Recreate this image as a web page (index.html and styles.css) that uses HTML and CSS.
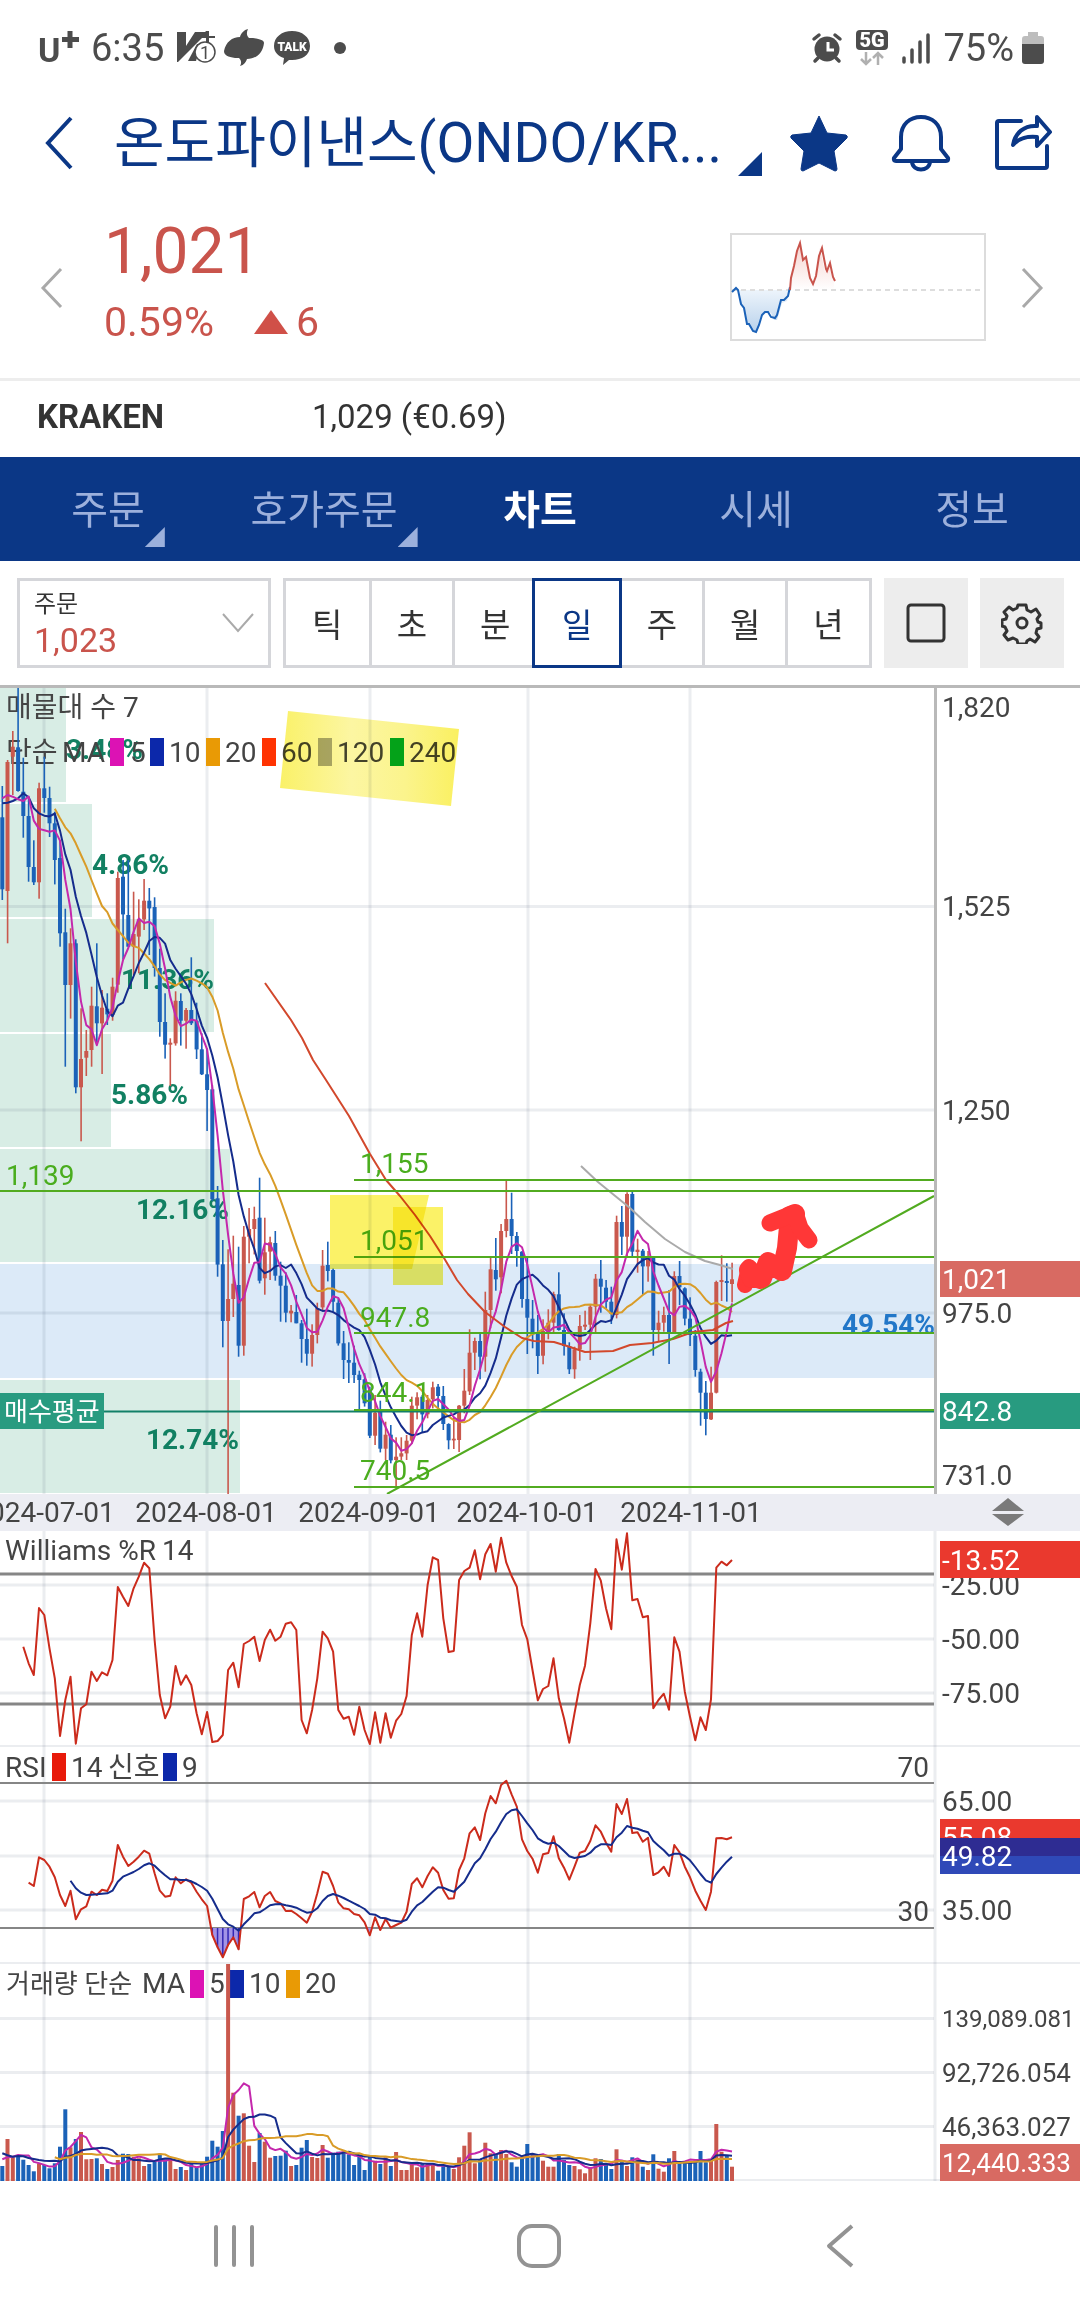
FILE: index.html
```html
<!DOCTYPE html>
<html lang="ko">
<head>
<meta charset="utf-8">
<meta name="viewport" content="width=device-width">
<title>온도파이낸스 차트</title>
<link rel="stylesheet" href="styles.css">
</head>
<body>
<div class="status">
  <div class="status-group">
    <svg class="carrier" width="42" height="40" viewBox="0 0 42 40"><text x="1" y="34" class="carrier-text">U</text><path d="M33 3v17M25 11.500h17" stroke="#4c4c4c" stroke-width="5"/></svg>
    <span class="status-text clock">6:35</span>
    <svg width="40" height="36" viewBox="0 0 40 36"><path d="M1 2h9v14L19 2h13L2 32H1z" fill="#4c4c4c"/><path d="M30 1h3v5h6v2h-6v5h-3V8h-6z" fill="#4c4c4c"/><path d="M12 31l9-17h4l-5 17z" fill="#4c4c4c"/><circle cx="29" cy="22" r="10" fill="#fff" stroke="#4c4c4c" stroke-width="1.500"/><text x="29" y="29" text-anchor="middle" class="badge-text">1</text></svg>
    <svg width="40" height="38" viewBox="0 0 40 38"><path d="M24 0c-2 4-1 7 1 9h4c7 1 11 2 11 5-1 10-8 16-17 16-1 3-3 6-7 7 2-3 1-6-1-8h-4C4 28 0 26 0 22 2 13 8 8 16 8c1-4 4-7 8-8z" fill="#4c4c4c"/></svg>
    <svg width="40" height="38" viewBox="0 0 40 38"><path d="M20 2c10 0 18 6 18 15s-8 14-18 14h-3l-6 5 1-7C6 27 2 23 2 17 2 8 10 2 20 2z" fill="#4c4c4c"/><text x="20" y="22" text-anchor="middle" class="talk-text">TALK</text></svg>
    <span class="dot"></span>
  </div>
  <div class="status-group status-right">
    <svg width="32" height="32" viewBox="0 0 32 32"><g fill="none" stroke="#4c4c4c" stroke-width="3.500" stroke-linecap="round"><path d="M3 7l5-4M29 7l-5-4M7 26l-3 3M25 26l3 3"/></g><circle cx="16" cy="17" r="12.500" fill="#4c4c4c"/><path d="M17 10v8h6" fill="none" stroke="#fff" stroke-width="3"/></svg>
    <svg width="34" height="38" viewBox="0 0 34 38"><rect x="1" y="1" width="32" height="20" rx="4" fill="#4c4c4c"/><text x="17" y="18" text-anchor="middle" class="fiveg-text">5G</text><path d="M11 23v12M6 30l5 5 5-5M23 36V24M18 29l5-5 5 5" fill="none" stroke="#b0b0b0" stroke-width="2.500"/></svg>
    <svg width="30" height="32" viewBox="0 0 30 32"><path d="M3 26v4M11 18v12M19 10v20M27 3v27" stroke="#4c4c4c" stroke-width="3.500" stroke-linecap="round"/></svg>
    <span class="status-text">75%</span>
    <svg width="22" height="32" viewBox="0 0 22 32"><path d="M6 0h10v4h3q3 0 3 3v6H0V7q0-3 3-3h3z" fill="#bdbdbd"/><path d="M0 12h22v17q0 3-3 3H3q-3 0-3-3z" fill="#4c4c4c"/></svg>
  </div>
</div>

<header class="header">
  <button class="icon-button back" aria-label="뒤로"><svg width="32" height="56" viewBox="0 0 32 56"><path d="M29 3L6 28l23 25" fill="none" stroke="#0b3786" stroke-width="4"/></svg></button>
  <h1 class="title">온도파이낸스(ONDO/KR...</h1>
  <svg class="corner" width="24" height="24" viewBox="0 0 24 24"><path d="M24 0v24H0z" fill="#0b3786"/></svg>
  <div class="header-actions">
    <button class="icon-button" aria-label="즐겨찾기"><svg width="60" height="60" viewBox="0 0 60 60"><path d="M30 3l8 17 19 2q2 1 1 3L45 38l3 18q0 2-2 2L30 50l-16 8q-2 0-2-2l3-18L2 25q-1-2 1-3l19-2z" fill="#0b3786" stroke="#0b3786" stroke-width="1" stroke-linejoin="round"/></svg></button>
    <button class="icon-button" aria-label="알림"><svg width="60" height="60" viewBox="0 0 60 60"><g fill="none" stroke="#0b3786" stroke-width="4" stroke-linejoin="round"><path d="M10 36V24C10 11 19 4 30 4s20 7 20 20v12l7 9q1 3-2 3H5q-3 0-2-3z"/><path d="M21 49c1 10 17 10 18 0"/></g></svg></button>
    <button class="icon-button" aria-label="공유"><svg width="60" height="60" viewBox="0 0 60 60"><g fill="none" stroke="#0b3786" stroke-width="4" stroke-linejoin="round" stroke-linecap="round"><path d="M28 8H6q-2 0-2 2v43q0 2 2 2h46q2 0 2-2V33"/><path d="M20 32c2-12 11-20 24-19V4l13 15-13 14v-9c-10-1-18 1-24 8z"/></g></svg></button>
  </div>
</header>

<section class="quote">
  <button class="icon-button" aria-label="이전 종목"><svg width="24" height="44" viewBox="0 0 24 44"><path d="M21 3L3 22l18 19" fill="none" stroke="#a9a9a9" stroke-width="3"/></svg></button>
  <div class="quote-body">
    <div class="price">1,021</div>
    <div class="change"><span>0.59%</span><svg width="34" height="24" viewBox="0 0 34 24"><path d="M17 0l17 24H0z" fill="#d05048"/></svg><span>6</span></div>
  </div>
  <svg class="mini" width="256" height="110" viewBox="730 233 256 110">
    <defs><linearGradient id="mb" x1="0" y1="0" x2="0" y2="1"><stop offset="0" stop-color="#edf4fb"/><stop offset="1" stop-color="#b9d2ec"/></linearGradient><linearGradient id="mr" x1="0" y1="0" x2="0" y2="1"><stop offset="0" stop-color="#f6d0cc"/><stop offset="1" stop-color="#fff"/></linearGradient></defs>
    <rect x="731" y="234" width="254" height="106" fill="#fff" stroke="#dcdcdc" stroke-width="2"/>
    <path d="M738 290l3 14 3 4 3 16h3l3 8h4l3-9 3-10 4-2 4 2 3 7h3l5-17 5-2 3-11z" fill="url(#mb)"/>
    <path d="M790 290l3-22 3-10 4-16 3 17 3-3 4 24 3 4 3-8 4-28 5 24 4-8 3 14 2 3v9z" fill="url(#mr)"/>
    <path d="M732 290h253" stroke="#ddd" stroke-width="2" stroke-dasharray="5 4"/>
    <path d="M732 292l4-4 2 2 3 14 3 4 3 16h2l4 7 3 1 3-7 3-10 3-3h3l3 5 4 1 2-3 4-15h3l4-4 2-9" fill="none" stroke="#1b62b8" stroke-width="2"/>
    <path d="M790 290l1-12 3-12 3-15 3-8 3 17 3-3 4 21 3 6 3-8 3-20 3-8 4 21 1 2 3-8 3 14 2 4" fill="none" stroke="#c9544c" stroke-width="2"/>
  </svg>
  <button class="icon-button next" aria-label="다음 종목"><svg width="24" height="44" viewBox="0 0 24 44"><path d="M3 3l18 19L3 41" fill="none" stroke="#a9a9a9" stroke-width="3"/></svg></button>
</section>

<div class="exchange"><strong>KRAKEN</strong><span>1,029 (€0.69)</span></div>

<nav class="tabs">
  <a href="#order">주문<i class="more"></i></a>
  <a href="#book">호가주문<i class="more"></i></a>
  <a href="#chart" class="active">차트</a>
  <a href="#market">시세</a>
  <a href="#info">정보</a>
</nav>

<div class="toolbar">
  <button class="order" aria-haspopup="listbox"><span class="order-text"><small>주문</small><b>1,023</b></span><svg width="34" height="22" viewBox="0 0 34 22"><path d="M2 2l15 17L32 2" fill="none" stroke="#aaa" stroke-width="2"/></svg></button>
  <div class="periods">
    <button>틱</button><button>초</button><button>분</button><button class="active">일</button><button>주</button><button>월</button><button>년</button>
  </div>
  <button class="tool" aria-label="전체화면"><svg width="42" height="42" viewBox="0 0 42 42"><rect x="3" y="3" width="36" height="36" rx="3" fill="none" stroke="#333" stroke-width="3"/></svg></button>
  <button class="tool" aria-label="설정"><svg width="42" height="42" viewBox="0 0 42 42"><g fill="none" stroke="#333" stroke-width="3" stroke-linejoin="round"><path d="M17 3h8l1 5 4 2 5-3 4 6-3 4 1 3 3 1v5l-4 1-1 4 3 4-4 5-5-3-3 2-1 3h-8l-1-4-4-2-5 2-4-5 3-4-2-4-3-1v-6l4-1 1-3-3-4 5-5 4 3 4-2z"/><circle cx="21" cy="21" r="5"/></g></svg></button>
</div>

<main class="charts">
  <svg class="panel main-panel" viewBox="0 688 1080 806">
    <defs><linearGradient id="ink" x1="0" y1="0" x2="1" y2="0"><stop offset="0" stop-color="#faf168"/><stop offset=".4" stop-color="#fcf6a2"/><stop offset=".7" stop-color="#fbf48c"/><stop offset="1" stop-color="#faf060"/></linearGradient></defs>
    <g fill="#d8ede5">
      <rect x="0" y="688" width="66" height="114"/><rect x="0" y="804" width="92" height="113"/><rect x="0" y="919" width="214" height="113"/><rect x="0" y="1034" width="111" height="113"/><rect x="0" y="1149" width="230" height="113"/><rect x="0" y="1380" width="240" height="113"/>
    </g>
    <rect x="0" y="1264" width="934" height="114" fill="#dceaf8"/>
    <g class="grid"><path d="M0 906.500h934M0 1110h934M0 1313h934"/><path d="M44 688v806M207 688v806M370 688v806M528 688v806M690 688v806"/></g>
    <g class="share"><text x="66" y="759">3.48%</text><text x="92" y="874">4.86%</text><text x="214" y="989" text-anchor="end">11.36%</text><text x="111" y="1104">5.86%</text><text x="229" y="1219" text-anchor="end">12.16%</text><text x="239" y="1449" text-anchor="end">12.74%</text></g>
    <text class="share-blue" x="935" y="1334" text-anchor="end">49.54%</text>
    <g class="label"><text x="6" y="717">매물대 수 7</text><text x="6" y="762">단순</text><text x="62" y="762">MA</text></g>
    <rect x="110" y="738" width="14" height="28" fill="#dc12b4"/><rect x="150" y="738" width="14" height="28" fill="#0c28aa"/><rect x="206" y="738" width="14" height="28" fill="#e99a05"/><rect x="262" y="738" width="14" height="28" fill="#ff3302"/><rect x="318" y="738" width="14" height="28" fill="#aaa"/><rect x="390" y="738" width="14" height="28" fill="#04a92c"/>
    <g class="label"><text x="130" y="762">5</text><text x="169" y="762">10</text><text x="225" y="762">20</text><text x="281" y="762">60</text><text x="337" y="762">120</text><text x="409" y="762">240</text></g>
    <g id="candles"></g>
    <g id="averages" class="line"></g>
    <g class="line">
      <path stroke="#d2482c" d="M265 983L291 1020 302 1038 313 1060 326 1080 349 1116 370 1154 386 1180 400 1196 415 1215 430 1236 444 1258 457 1280 468 1294 485 1312 505 1327 522 1338 534 1341 554 1342 567 1346 585 1352 613 1351 630 1345 652 1343 673 1339 693 1332 713 1330 726 1323 733 1321"/>
      <path stroke="#aaa" d="M581 1166L598 1182 614 1195 630 1208 645 1222 665 1239 685 1252 705 1261 720 1265 733 1269"/>
    </g>
    <path d="M0 1411.500h934" stroke="#128068" stroke-width="2"/>
    <g stroke="#52ab20" stroke-width="2" fill="none"><path d="M354 1180h580M0 1191h934M354 1257h580M354 1333h580M354 1410h580M354 1487h580M387 1494L934 1196"/></g>
    <g class="level"><text x="6" y="1185">1,139</text><text x="360" y="1173">1,155</text><text x="360" y="1250">1,051</text><text x="360" y="1327">947.8</text><text x="360" y="1402">844.1</text><text x="360" y="1480">740.5</text></g>
    <rect x="0" y="1393" width="104" height="36" fill="#289b80"/><text class="tag medium" x="4" y="1421">매수평균</text>
    <g class="marker"><path fill="url(#ink)" d="M288 711L459 729 451 806 280 788z"/><path d="M330 1195h99l-17 74h-82z"/><path d="M393 1207h50v78h-50z"/></g>
    <g fill="none" stroke="#ff3737" stroke-linecap="round" stroke-linejoin="round"><path stroke-width="16" d="M745 1285L749 1267 760 1281 769 1261 776 1270"/><path stroke-width="20" d="M749 1270L752 1278 762 1278 768 1262 782 1271 787 1248 790 1216 795 1214"/><path stroke-width="17" d="M770 1223L795 1213 800 1228 809 1240"/></g>
    <path d="M935.500 688v806" stroke="#b9b9b9" stroke-width="3"/>
    <g class="label axis"><text x="942" y="717">1,820</text><text x="942" y="916">1,525</text><text x="942" y="1120">1,250</text><text x="942" y="1323">975.0</text><text x="942" y="1485">731.0</text></g>
    <rect x="940" y="1261" width="140" height="36" fill="#d86a62"/><rect x="940" y="1393" width="140" height="36" fill="#289b80"/>
    <g class="tag"><text x="942" y="1289">1,021</text><text x="942" y="1421">842.8</text></g>
  </svg>
  <svg class="panel dates" viewBox="0 1494 1080 37">
    <g class="label" text-anchor="middle"><text x="44" y="1522">2024-07-01</text><text x="206" y="1522">2024-08-01</text><text x="369" y="1522">2024-09-01</text><text x="527" y="1522">2024-10-01</text><text x="691" y="1522">2024-11-01</text></g>
    <path d="M992 1511l16-13 16 13zM992 1514h32l-16 12z" fill="#7a7a7a"/>
  </svg>
  <svg class="panel" viewBox="0 1531 1080 216">
    <g class="grid"><path d="M0 1585h934M0 1639h934M0 1693h934M0 1746.500h1080"/><path d="M44 1531v216M207 1531v216M370 1531v216M528 1531v216M690 1531v216M935 1531v216"/></g>
    <path d="M0 1574h934M0 1704h934" stroke="#868686" stroke-width="3"/>
    <g class="label"><text x="5" y="1560">Williams %R</text><text x="162" y="1560">14</text></g>
    <g id="williams" class="line"></g>
    <g class="label"><text x="942" y="1595">-25.00</text><text x="942" y="1649">-50.00</text><text x="942" y="1703">-75.00</text></g>
    <rect x="940" y="1541" width="140" height="37" fill="#ea392e"/><text class="tag" x="942" y="1570">-13.52</text>
  </svg>
  <svg class="panel" viewBox="0 1747 1080 217">
    <defs><clipPath id="low"><rect x="0" y="1928" width="934" height="36"/></clipPath></defs>
    <g class="grid"><path d="M0 1801h934M0 1856h934M0 1910h934M0 1963.500h1080"/><path d="M44 1747v217M207 1747v217M370 1747v217M528 1747v217M690 1747v217M935 1747v217"/></g>
    <path d="M0 1783h934M0 1928h934" stroke="#868686" stroke-width="2"/>
    <g class="label"><text x="5" y="1777">RSI</text><text x="71" y="1777">14</text><text x="108" y="1777">신호</text><text x="182" y="1777">9</text><text x="929" y="1777" text-anchor="end">70</text><text x="929" y="1921" text-anchor="end">30</text></g>
    <rect x="52" y="1753" width="14" height="28" fill="#e81a0a"/><rect x="163" y="1753" width="14" height="28" fill="#0c28aa"/>
    <g id="oversold" clip-path="url(#low)"></g>
    <g id="rsi" class="line"></g>
    <g class="label"><text x="942" y="1811">65.00</text><text x="942" y="1920">35.00</text></g>
    <rect x="940" y="1819" width="140" height="37" fill="#ea392e"/><text class="tag" x="942" y="1847">55.08</text>
    <rect x="940" y="1838" width="140" height="18" fill="#2e2c92"/><rect x="940" y="1856" width="140" height="18" fill="#2f49b8"/><text class="tag" x="942" y="1866">49.82</text>
  </svg>
  <svg class="panel" viewBox="0 1964 1080 217">
    <g class="grid"><path d="M0 2018.500h934M0 2072.500h934M0 2126.500h934M0 2180.500h1080"/><path d="M44 1964v217M207 1964v217M370 1964v217M528 1964v217M690 1964v217M935 1964v217"/></g>
    <g class="label"><text x="6" y="1993" class="medium">거래량 단순</text><text x="142" y="1993">MA</text><text x="209" y="1993">5</text><text x="249" y="1993">10</text><text x="305" y="1993">20</text></g>
    <rect x="190" y="1970" width="14" height="28" fill="#dc12b4"/><rect x="230" y="1970" width="14" height="28" fill="#0c28aa"/><rect x="286" y="1970" width="14" height="28" fill="#e99a05"/>
    <g id="volume"></g>
    <g id="volume-averages" class="line"></g>
    <g class="label"><text x="942" y="2027" class="small">139,089.081</text><text x="942" y="2082" class="medium">92,726.054</text><text x="942" y="2136" class="medium">46,363.027</text></g>
    <rect x="940" y="2144" width="140" height="37" fill="#d86a62"/><text class="tag medium" x="942" y="2172">12,440.333</text>
  </svg>
</main>

<footer class="system-nav">
  <button class="icon-button" aria-label="최근 앱"><svg width="40" height="48" viewBox="0 0 40 48"><path d="M2 4v38M20 4v38M38 4v38" stroke="#939393" stroke-width="4" stroke-linecap="round"/></svg></button>
  <button class="icon-button" aria-label="홈"><svg width="48" height="48" viewBox="0 0 48 48"><rect x="4" y="3" width="40" height="40" rx="13" fill="none" stroke="#939393" stroke-width="4"/></svg></button>
  <button class="icon-button" aria-label="뒤로"><svg width="32" height="48" viewBox="0 0 32 48"><path d="M28 3L5 23l23 20" fill="none" stroke="#939393" stroke-width="4" stroke-linejoin="round"/></svg></button>
</footer>
<script src="chart.js"></script>
</body>
</html>
```
FILE: styles.css
```css
* { box-sizing: border-box; }
body { margin: 0; background: #fff; color: #333; font-family: Roboto, "Noto Sans CJK KR", sans-serif; }
button { font: inherit; color: inherit; padding: 0; border: 0; background: none; cursor: pointer; }
svg { display: block; flex: none; }

.status { display: flex; justify-content: space-between; align-items: center; height: 96px; padding: 0 36px 0 37px; }
.status-group { display: flex; align-items: center; gap: 8px; }
.status-right { gap: 12px; }
.status-text { font-size: 38px; line-height: 40px; color: #4c4c4c; }
.status-right .status-text { margin-right: -4px; }
.clock { margin: 0 4px; }
.carrier-text { font-size: 34px; font-weight: 700; fill: #4c4c4c; }
.badge-text { font-size: 18px; fill: #4c4c4c; }
.talk-text { font-size: 12px; font-weight: 900; fill: #fff; }
.fiveg-text { font-size: 20px; font-weight: 900; fill: #fff; }
.dot { width: 12px; height: 12px; margin-left: 14px; border-radius: 50%; background: #4c4c4c; }

.icon-button { display: flex; align-items: center; justify-content: center; flex: none; }
.header { display: flex; align-items: center; height: 94px; padding: 0 27px 0 42px; color: #0b3786; }
.title { margin: 0 0 0 40px; font-size: 55px; line-height: 80px; font-weight: 400; white-space: nowrap; }
.corner { align-self: flex-end; margin: 0 auto 14px 16px; }
.header-actions { display: flex; gap: 42px; }

.quote { display: flex; align-items: center; height: 188px; padding: 8px 36px 0 40px; color: #c9544c; }
.quote-body { flex: 1; margin-left: 40px; padding-bottom: 4px; }
.price { font-size: 64px; line-height: 72px; }
.change { display: flex; align-items: center; gap: 8px; font-size: 41px; line-height: 68px; }
.change svg { margin-left: 32px; }
.next { margin-left: 34px; }

.exchange { display: flex; align-items: center; height: 79px; padding: 0 37px 4px; border-top: 3px solid #ededed; font-size: 33px; line-height: 40px; }
.exchange strong { width: 275px; font-weight: 700; }

.tabs { display: grid; grid-template-columns: repeat(5, 1fr); height: 104px; padding-top: 4px; background: #0b3786; }
.tabs a { position: relative; justify-self: center; align-self: center; color: #9cb0dc; font-size: 40px; line-height: 56px; text-decoration: none; }
.tabs .active { color: #fff; font-weight: 700; }
.more { position: absolute; right: -20px; bottom: -8px; width: 20px; height: 20px; background: #9cb0dc; clip-path: polygon(100% 0, 100% 100%, 0 100%); }

.toolbar { display: grid; grid-template-columns: 253fr 588fr 84fr 84fr; gap: 12px; height: 127px; padding: 17px 16px 0 17px; border-bottom: 3px solid #b9b9b9; }
.toolbar > * { height: 90px; }
.order { display: flex; align-items: center; justify-content: space-between; padding: 0 13px 0 14px; border: 3px solid #d5d6da; text-align: left; }
.order-text { display: flex; flex-direction: column; }
.order small { font-size: 24px; line-height: 34px; }
.order b { font-size: 34px; line-height: 38px; font-weight: 400; color: #c9544c; }
.periods { display: grid; grid-template-columns: repeat(7, 1fr); border: 3px solid #d5d6da; }
.periods button { font-size: 33px; border-left: 3px solid #d5d6da; }
.periods button:first-child { border-left: 0; }
.periods .active { margin: -3px; border: 3px solid #0b3786; color: #0b3786; z-index: 1; }
.tool { display: flex; align-items: center; justify-content: center; background: #ededed; }

.panel { width: 100%; height: auto; font-size: 28px; }
.dates { background: #ecedf3; }
.grid { fill: none; stroke: #3c506e; stroke-opacity: .1; stroke-width: 3; }
.label { fill: #444; }
.share { fill: #128062; font-weight: 700; }
.share-blue { fill: #2277c8; font-weight: 700; }
.level { fill: #4aad1e; }
.tag { fill: #fff; }
.small { font-size: 24px; }
.medium { font-size: 26px; }
.line { fill: none; stroke-width: 2; stroke-linejoin: round; }
.marker { fill: #fbf267; mix-blend-mode: multiply; }
.marker path { mix-blend-mode: multiply; }

.system-nav { display: flex; justify-content: space-between; align-items: center; height: 131px; padding: 0 224px 0 214px; }
```
FILE: chart.js
```js
// Daily bars, as drawn heights: direction, high, low, body top, body bottom.
const bars = `B 318 660 412 628,R 240 790 246 633,R 153 345 200 230,B 24 335 202 333,B 233 473 335 408,B 350 605 408 561,B 481 615 561 607,R 308 656 325 607,B 230 398 325 354,B 320 471 354 430,
B 395 613 430 540,B 480 800 534 760,B 686 1160 757 915,R 745 1016 790 915,B 778 1240 790 1222,R 985 1384 1137 1222,R 1050 1188 1113 1133,R 920 1160 977 1110,B 790 1095 979 1030,R 930 1182 983 1030,
B 940 1035 986 1003,R 893 1022 920 1005,R 575 938 594 914,B 540 838 590 703,B 540 800 705 800,R 635 885 762 800,R 658 880 718 770,R 597 750 662 718,B 624 825 662 685,B 652 890 681 864,
B 806 1070 864 1026,B 940 1136 1026 1094,R 1075 1218 1088 1094,R 934 1097 962 1090,B 940 1097 963 1022,R 984 1106 990 1022,B 832 1035 990 1030,B 968 1137 1022 1108,B 1060 1185 1108 1183,B 1105 1353 1183 1230,
B 1215 1562 1228 1558,B 1518 1790 1555 1754,B 1680 2002 1753 1923,R 1708 2442 1857 1923,R 1667 1911 1811 1857,B 1700 2030 1815 1997,R 1638 2027 1670 1997,R 1584 1750 1647 1670,R 1580 1723 1617 1647,B 1493 1810 1613 1802,
R 1613 1844 1717 1795,R 1670 1800 1687 1715,B 1653 1802 1689 1787,B 1745 1925 1787 1817,B 1777 1927 1817 1898,R 1875 1927 1892 1900,B 1845 1930 1896 1930,B 1920 2048 1930 1977,B 1886 2057 1977 2021,R 1933 2060 1965 2021,
R 1868 1990 1884 1965,R 1710 1890 1757 1882,B 1685 1804 1755 1773,B 1766 1895 1770 1865,B 1855 1997 1868 1990,B 1953 2097 1990 2040,B 1987 2109 2040 2048,B 1997 2109 2048 2085,B 2072 2190 2084 2100,B 2080 2180 2098 2170,
B 2120 2274 2130 2267,R 2145 2295 2198 2267,B 2162 2317 2195 2306,R 2225 2340 2264 2306,B 2235 2350 2264 2341,R 2272 2420 2330 2340,R 2272 2340 2320 2330,R 2265 2340 2282 2320,R 2150 2292 2177 2282,R 2137 2218 2152 2177,
B 2145 2256 2150 2203,R 2145 2215 2160 2203,R 2105 2185 2122 2158,B 2112 2185 2120 2148,B 2118 2250 2148 2232,B 2230 2308 2232 2281,R 2210 2307 2276 2281,R 2175 2316 2177 2280,R 2067 2200 2132 2177,R 1948 2145 2018 2134,
R 1973 2070 1983 2018,B 1957 2098 1983 2030,R 1835 2075 1890 2030,R 1732 1945 1768 1890,B 1674 1832 1770 1798,R 1632 1840 1653 1792,R 1500 1672 1617 1653,B 1538 1722 1617 1668,B 1656 1760 1668 1713,B 1713 1883 1715 1857,
B 1730 2022 1857 1913,B 1860 2005 1916 1963,B 1905 2082 1960 2028,R 1918 2053 1953 2027,R 1888 1978 1928 1950,R 1835 1960 1842 1928,B 1777 1952 1843 1950,B 1900 2027 1950 1998,B 1987 2082 1998 2068,R 2000 2096 2008 2068,
R 1905 2042 1938 2008,R 1892 1950 1934 1940,R 1875 2040 1880 1934,R 1782 1957 1796 1880,B 1740 1898 1796 1820,B 1800 1886 1823 1865,B 1820 1932 1865 1901,R 1607 1915 1626 1905,B 1578 1725 1626 1670,R 1537 1728 1542 1670,
B 1535 1730 1542 1715,R 1676 1778 1709 1716,B 1707 1844 1712 1759,R 1713 1805 1736 1759,B 1730 2027 1734 1950,R 1892 1985 1928 1950,R 1880 1955 1905 1928,B 1830 2052 1905 1957,R 1774 1960 1788 1957,B 1743 1875 1788 1822,
B 1822 1936 1825 1916,B 1852 1998 1916 1965,B 1950 2090 1967 2070,B 2066 2237 2075 2138,B 2103 2266 2138 2217,R 2060 2220 2138 2218,R 1802 2140 1806 2138,R 1726 1863 1800 1806,B 1750 1865 1803 1809,R 1748 1867 1798 1812`
  .split(',').map(s => { const [dir, ...v] = s.trim().split(' '); return { dir, v: v.map(Number) }; });

const williams = [380,430,465,264,285,385,475,648,540,470,671,565,553,455,483,457,466,420,201,230,258,205,170,128,145,360,525,595,560,438,494,466,495,580,643,576,666,663,645,450,428,502,372,363,350,423,360,329,362,350,311,307,330,600,640,570,475,335,355,395,570,596,590,644,560,630,672,577,668,580,653,602,582,528,345,280,350,195,112,120,295,396,393,180,153,143,91,178,103,72,155,53,128,168,200,315,358,450,541,507,498,415,535,595,668,580,495,437,310,147,182,265,328,58,149,40,241,237,292,288,565,540,521,569,352,395,515,590,661,592,630,538,143,125,136,120];
const rsi = [428,438,352,360,380,412,465,498,452,538,508,499,455,465,449,453,422,315,350,378,365,350,332,341,400,452,470,467,412,430,418,428,455,478,498,585,622,652,615,592,628,477,469,456,502,468,456,483,490,513,512,522,535,548,515,460,395,401,438,487,505,508,522,526,547,586,532,570,537,563,555,548,515,432,415,442,408,382,398,450,476,475,390,355,280,262,300,220,168,190,135,122,163,200,298,333,356,398,343,339,289,355,383,419,380,338,333,303,256,275,308,335,192,222,177,279,277,305,293,405,397,380,408,315,337,380,412,452,482,510,455,295,294,298,292];
const signal = [422,445,458,465,464,463,461,460,452,425,410,403,396,387,376,370,377,392,406,418,418,420,420,424,432,441,452,476,507,537,553,560,572,553,537,520,517,507,496,493,492,496,499,503,511,518,516,505,483,468,462,467,474,482,490,498,507,522,524,533,535,541,543,545,539,515,496,486,470,455,442,443,450,455,440,425,397,370,355,328,297,275,247,222,211,208,228,250,270,295,305,311,308,318,333,349,354,351,348,338,322,313,313,315,292,278,258,263,266,272,277,303,317,331,347,341,341,348,361,381,402,421,428,402,383,365,350];
const volume = [648,567,622,618,629,645,664,640,645,655,640,590,478,592,567,546,628,627,625,642,657,651,630,611,612,620,625,648,642,632,611,628,630,657,651,660,640,652,640,620,572,590,543,42,428,497,490,587,636,549,575,623,618,617,602,648,645,593,570,621,624,585,623,608,605,610,613,645,621,660,620,632,642,622,648,606,660,660,640,652,640,640,642,662,648,650,657,622,587,547,640,630,578,610,612,600,612,637,650,620,582,612,615,632,650,650,612,630,645,648,658,670,652,625,627,645,657,598,630,648,622,628,650,660,613,656,665,625,603,640,638,638,632,603,637,630,522,605,615,650];

const RED = '#c9584d', BLUE = '#1b62b8';
const xAt = i => 2.3 + 5.25 * i;
const price = v => 680 + v / 3;
const fill = (id, html) => { document.getElementById(id).innerHTML = html; };
const points = (values, start, y) => values.map((v, k) => xAt(start + k).toFixed(1) + ',' + y(v).toFixed(1)).join(' ');
const line = (values, start, y, color) => `<polyline points="${points(values, start, y)}" stroke="${color}"/>`;
const average = (values, n) => values.slice(n - 1).map((_, k) => values.slice(k, k + n).reduce((a, b) => a + b) / n);
const rect = (x, y, w, h, c) => `<rect x="${x.toFixed(1)}" y="${y.toFixed(1)}" width="${w}" height="${Math.max(h, 1.5).toFixed(1)}" fill="${c}"/>`;

fill('candles', bars.map(({ dir, v: [hi, lo, top, bottom] }, i) => {
  const c = dir === 'R' ? RED : BLUE, x = xAt(i);
  return rect(x - 0.8, price(hi), 1.6, (lo - hi) / 3, c) + rect(x - 2, price(top), 4, (bottom - top) / 3, c);
}).join(''));

const closes = bars.map(b => b.dir === 'R' ? b.v[2] : b.v[3]);
fill('averages',
  line([386, 415, 442, 460, 490, 525, 560, 600, 640, ...average(closes, 20)], 10, price, '#d99c28') +
  line([370, 368, 363, 355, 340, 352, 385, 400, 407, ...average(closes, 10)], 0, price, '#152c8c') +
  line([355, 345, 350, 358, ...average(closes, 5)], 0, price, '#c428ac'));

fill('williams', line(williams, 4, v => 1520 + v / 3, '#cb2b1c'));

const rsiY = v => 1740 + v / 3;
let stripes = '';
for (let i = 40; i < 46; i++) stripes += `<path d="M${xAt(i)} 1928V${rsiY(rsi[i - 5])}" stroke="#3327b4" stroke-width="1.5"/>`;
fill('oversold', `<polygon points="${points(rsi, 5, rsiY)} 732,1780 28,1780" fill="#a394e6"/>` + stripes);
fill('rsi', line(rsi, 5, rsiY, '#cb2b1c') + line(signal, 13, rsiY, '#152c8c'));

const volumeY = v => 1950 + v / 3;
fill('volume', volume.map((v, i) => rect(xAt(i) - 2, volumeY(v), 4, 2181 - volumeY(v), bars[i].dir === 'R' ? RED : BLUE)).join(''));
fill('volume-averages',
  line([628, 622, 620, 615, ...average(volume, 5)], 0, volumeY, '#c428ac') +
  line([610, 616, 620, 618, 619, 624, 627, 630, 632, ...average(volume, 10)], 0, volumeY, '#152c8c') +
  line([622, 628, 623, 622, 615, 612, 612, 612, 614, ...average(volume, 20)], 10, volumeY, '#d99c28'));
```
